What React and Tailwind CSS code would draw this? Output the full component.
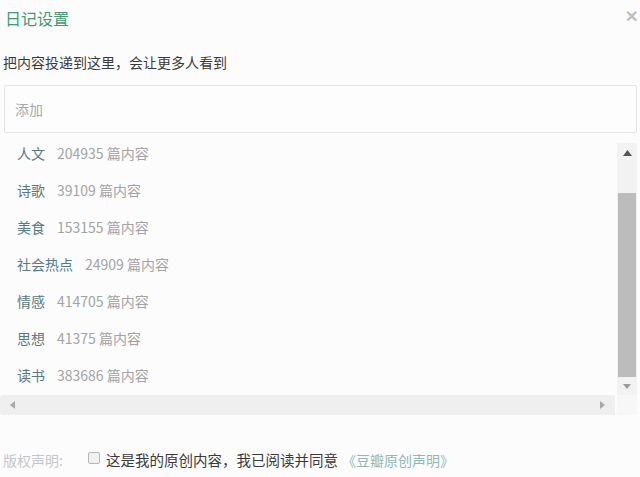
import React from 'react';

const categories = [
  { name: '人文', count: 204935 },
  { name: '诗歌', count: 39109 },
  { name: '美食', count: 153155 },
  { name: '社会热点', count: 24909 },
  { name: '情感', count: 414705 },
  { name: '思想', count: 41375 },
  { name: '读书', count: 383686 },
];

const App = () => {
  return (
    <div
      className="relative w-[640px] h-[477px] bg-[#fcfcfd] overflow-hidden"
      style={{ fontFamily: '"Noto Sans CJK SC", "Noto Sans", sans-serif' }}
    >
      {/* Header */}
      <div className="flex items-center justify-between h-[20px] mt-[8px] pl-[5px] pr-[2px]">
        <h1 className="text-[16px] leading-[20px] text-[#3f9a70]">日记设置</h1>
        <button className="text-[#bdbdbd] text-[16px] font-bold leading-[20px] -mt-[6px]">✕</button>
      </div>

      <p className="mt-[24px] pl-[3px] text-[14px] leading-[20px] text-[#3a3a3a]">
        把内容投递到这里，会让更多人看到
      </p>

      {/* Input */}
      <div className="mt-[13px] ml-[4px] w-[633px] h-[48px] border border-[#e4e4e6] rounded-[2px] bg-[#fdfdfe] flex items-center pl-[10px]">
        <span className="text-[14px] text-[#a9a9a9]">添加</span>
      </div>

      {/* List with scrollbars */}
      <div className="mt-[7px] w-[637px] h-[275px] grid grid-cols-[1fr_20px] grid-rows-[1fr_20px]">
        <div className="flex flex-col gap-[11px] pl-[17px] overflow-hidden">
          {categories.map(c => (
            <div key={c.name} className="h-[26px] flex items-center text-[14px] whitespace-nowrap">
              <span className="text-[#557a80]">{c.name}</span>
              <span className="ml-[12px] text-[#a3a3a3]">{c.count} 篇内容</span>
            </div>
          ))}
        </div>

        {/* Vertical scrollbar */}
        <div className="flex flex-col mt-[3px] bg-[#f2f2f3]">
          <div className="h-[20px] flex items-center justify-center">
            <svg width="9" height="6" viewBox="0 0 9 6"><path d="M4.5 0 L9 6 L0 6 Z" fill="#555" /></svg>
          </div>
          <div className="h-[30px]" />
          <div className="flex-1 mx-[1px] bg-[#bcbcbd]" />
          <div className="h-[18px] flex items-center justify-center">
            <svg width="8" height="5" viewBox="0 0 8 5"><path d="M0 0 L8 0 L4 5 Z" fill="#9a9a9a" /></svg>
          </div>
        </div>

        {/* Horizontal scrollbar */}
        <div className="bg-[#efeff0] flex items-center justify-between px-[10px] mr-[2px] rounded-l-[3px]">
          <svg width="5" height="8" viewBox="0 0 5 8"><path d="M5 0 L5 8 L0 4 Z" fill="#a8a8a8" /></svg>
          <svg width="5" height="8" viewBox="0 0 5 8"><path d="M0 0 L5 4 L0 8 Z" fill="#a8a8a8" /></svg>
        </div>
        <div className="bg-[#f7f7f8]" />
      </div>

      {/* Copyright */}
      <div className="mt-[35px] pl-[3px] flex items-center h-[20px] text-[14px] whitespace-nowrap">
        <span className="text-[#c6c6c8] w-[85px]">版权声明:</span>
        <span className="w-[12px] h-[12px] border border-[#b8b8b8] rounded-[2px] bg-[#f0f0f0] -mt-[4px]" />
        <span className="ml-[6px] text-[14.5px] text-[#3a3a3a]">这是我的原创内容，我已阅读并同意</span>
        <span className="ml-[4px] text-[#8cbab2]">《豆瓣原创声明》</span>
      </div>
    </div>
  );
};

export default App;
